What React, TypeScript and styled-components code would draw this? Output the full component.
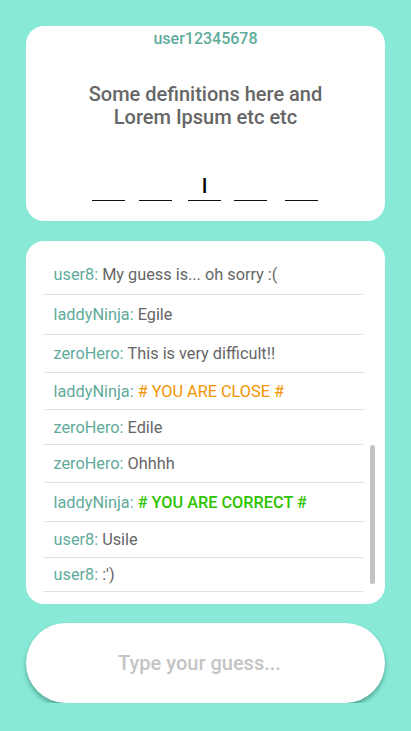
import React from "react";
import styled, { createGlobalStyle } from "styled-components";

const Global = createGlobalStyle`
  html, body { margin: 0; padding: 0; background: #87e9d6; }
  body { font-family: Roboto, "Noto Sans", Arial, sans-serif; }
`;

const Page = styled.div`
  display: flex;
  flex-direction: column;
  padding: 26px 26px 0 26px;
  gap: 20px;
`;

const Card = styled.div`
  background: #fff;
  border-radius: 18px;
  position: relative;
`;

const WordCard = styled(Card)`
  height: 195px;
  box-sizing: border-box;
  display: flex;
  flex-direction: column;
  align-items: center;
  padding-top: 4px;
`;

const Username = styled.div`
  color: #5fab9b;
  font-size: 16px;
  font-weight: 500;
  line-height: 18px;
`;

const Definition = styled.div`
  margin-top: 35px;
  color: #666;
  font-size: 20px;
  font-weight: 500;
  line-height: 23px;
  text-align: center;
  width: 260px;
`;

const Blanks = styled.div`
  margin-top: 45px;
  display: flex;
  align-self: flex-start;
  padding-left: 66px;
`;

const Blank = styled.div<{ $gap: number }>`
  width: 33px;
  height: 22px;
  margin-left: ${(p) => p.$gap}px;
  border-bottom: 1px solid #111;
  display: flex;
  align-items: flex-end;
  justify-content: center;
  font-size: 20px;
  line-height: 20px;
  color: #000;
  font-weight: 500;
  padding-bottom: 4px;
  box-sizing: content-box;
`;

const ChatCard = styled(Card)`
  height: 363px;
  box-sizing: border-box;
  padding: 13px 22px 0 17px;
  overflow: hidden;
`;

const List = styled.div`
  display: flex;
  flex-direction: column;
`;

const Row = styled.div<{ $h: number; $shift: number }>`
  height: ${(p) => p.$h}px;
  box-sizing: border-box;
  border-bottom: 1px solid #e2e2e2;
  display: flex;
  align-items: center;
  padding-left: ${(p) => 10 - p.$shift + 0.5}px;
  margin-left: ${(p) => p.$shift}px;
  margin-right: ${(p) => -p.$shift}px;
  font-size: 16.3px;
  white-space: nowrap;
`;

const Name = styled.span`
  color: #5fab9b;
  margin-right: 4px;
`;

const Msg = styled.span<{ $kind?: string }>`
  color: ${(p) =>
    p.$kind === "close" ? "#f39400" : p.$kind === "correct" ? "#2dc400" : "#666"};
  font-weight: ${(p) => (p.$kind === "correct" ? 500 : 400)};
`;

const Thumb = styled.div`
  position: absolute;
  right: 10px;
  top: 204px;
  width: 5px;
  height: 139px;
  border-radius: 3px;
  background: #c2c2c2;
`;

const InputWrap = styled.div`
  margin-top: -1px;
  height: 80px;
  border-radius: 40px;
  background: #fff;
  box-shadow: 0 3px 4px rgba(40, 110, 95, 0.55);
  display: flex;
  align-items: center;
  justify-content: center;
  padding-right: 12px;
`;

const Input = styled.input`
  border: none;
  outline: none;
  background: transparent;
  text-align: center;
  width: 100%;
  font-family: Roboto, Arial, sans-serif;
  font-size: 20px;
  font-weight: 500;
  color: #444;
  &::placeholder { color: #c4c4c4; }
`;

const messages: { name: string; text: string; kind?: string; h: number; shift: number }[] = [
  { name: "user8:", text: "My guess is... oh sorry :(", h: 41, shift: 0 },
  { name: "laddyNinja:", text: "Egile", h: 40, shift: 0 },
  { name: "zeroHero:", text: "This is very difficult!!", h: 38, shift: 2 },
  { name: "laddyNinja:", text: "# YOU ARE CLOSE #", kind: "close", h: 37, shift: 2 },
  { name: "zeroHero:", text: "Edile", h: 35, shift: 0 },
  { name: "zeroHero:", text: "Ohhhh", h: 38, shift: 2 },
  { name: "laddyNinja:", text: "# YOU ARE CORRECT #", kind: "correct", h: 39, shift: 2 },
  { name: "user8:", text: "Usile", h: 36, shift: 0 },
  { name: "user8:", text: ":')", h: 34, shift: 0 },
];

const blanks = [
  { letter: "", gap: 0 },
  { letter: "", gap: 14 },
  { letter: "I", gap: 16 },
  { letter: "", gap: 13 },
  { letter: "", gap: 18 },
];

export default function App() {
  return (
    <>
      <Global />
      <Page>
        <WordCard>
          <Username>user12345678</Username>
          <Definition>Some definitions here and Lorem Ipsum etc etc</Definition>
          <Blanks>
            {blanks.map((b, i) => (
              <Blank key={i} $gap={b.gap}>
                {b.letter}
              </Blank>
            ))}
          </Blanks>
        </WordCard>
        <ChatCard>
          <List>
            {messages.map((m, i) => (
              <Row key={i} $h={m.h} $shift={m.shift}>
                <Name>{m.name}</Name>
                <Msg $kind={m.kind}>{m.text}</Msg>
              </Row>
            ))}
          </List>
          <Thumb />
        </ChatCard>
        <InputWrap>
          <Input placeholder="Type your guess..." />
        </InputWrap>
      </Page>
    </>
  );
}
